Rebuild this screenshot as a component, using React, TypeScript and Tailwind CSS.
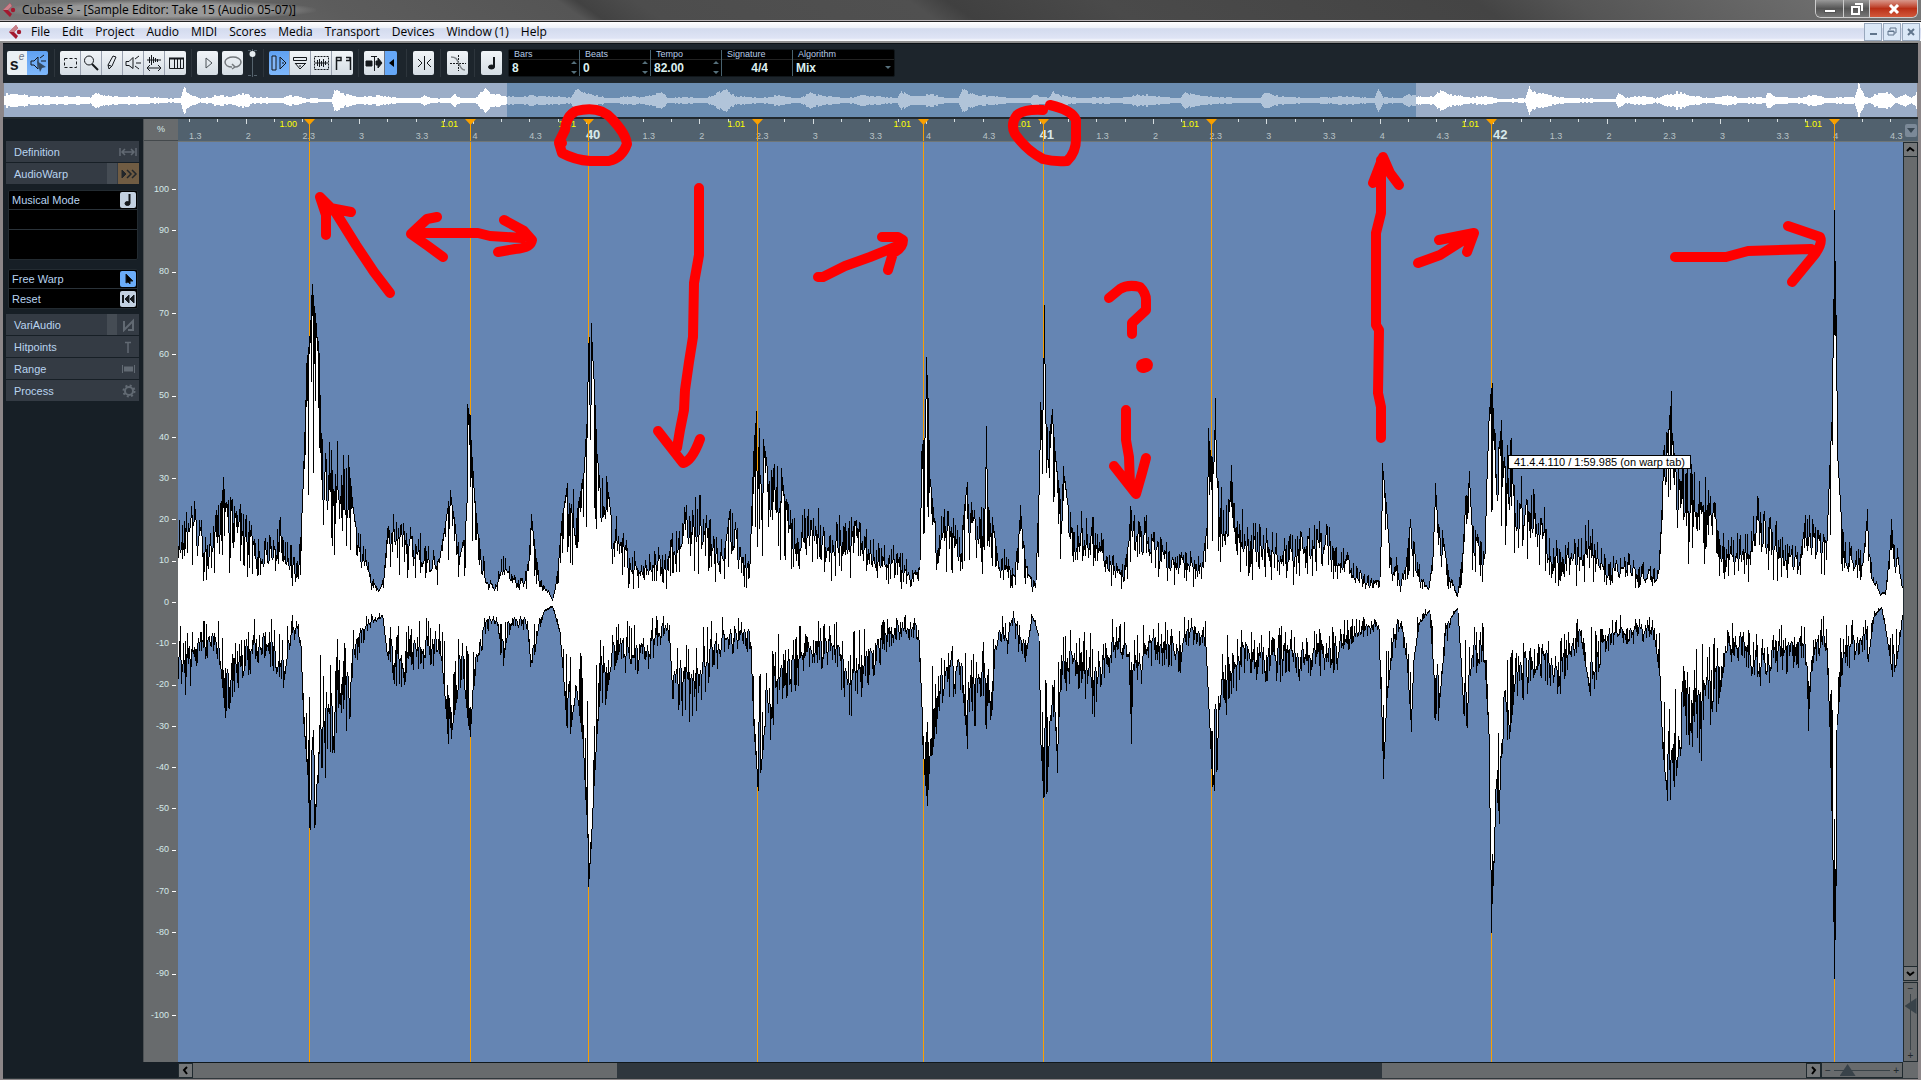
import type { ReactNode } from "react"

const ZERO = 602
const LEFT = 178
const RIGHT = 1903

// x, y pairs of the upper and lower peaks of the sample
const upper = [
  178, 520, 186, 503, 196, 507, 209, 533, 217, 507, 221, 500, 223, 475, 225, 502, 235, 500, 249, 522, 261, 543, 273, 533, 280, 520,
  289, 543, 296, 560, 300, 537, 303, 460, 306, 362, 309, 330, 312, 277, 314, 297, 319, 352, 321, 430, 324, 443, 340, 448, 348, 453,
  352, 497, 356, 527, 364, 543, 370, 570, 378, 590, 383, 577, 387, 527, 397, 508, 407, 525, 419, 533, 427, 547, 439, 557, 447, 507,
  450, 489, 455, 523, 464, 540, 466, 500, 467, 403, 470, 412, 471, 437, 474, 487, 478, 533, 486, 570, 494, 587, 500, 557, 505, 547,
  510, 567, 516, 577, 524, 573, 528, 560, 531, 512, 536, 557, 542, 583, 548, 590, 552, 599, 557, 570, 561, 520, 566, 485, 569, 477,
  573, 493, 577, 507, 583, 470, 586, 420, 588, 340, 591, 323, 594, 373, 597, 450, 600, 487, 606, 473, 611, 513, 621, 522, 629, 550,
  640, 557, 648, 557, 656, 543, 666, 550, 672, 530, 684, 507, 700, 497, 706, 517, 716, 533, 724, 547, 729, 510, 733, 510, 739, 540,
  749, 563, 753, 447, 756, 405, 759, 417, 763, 435, 767, 463, 773, 452, 781, 467, 785, 500, 792, 517, 811, 507, 823, 513, 831, 537,
  838, 515, 849, 517, 857, 510, 863, 517, 871, 537, 883, 547, 898, 547, 910, 567, 919, 567, 921, 447, 924, 435, 926, 355, 928, 393,
  930, 477, 934, 517, 938, 527, 944, 510, 950, 513, 956, 530, 962, 523, 966, 485, 970, 490, 978, 507, 984, 507, 986, 423, 988, 507,
  993, 523, 999, 567, 1005, 547, 1011, 570, 1017, 547, 1020, 503, 1023, 540, 1029, 570, 1035, 583, 1038, 493, 1040, 400, 1042, 410,
  1044, 299, 1046, 423, 1049, 430, 1052, 407, 1055, 450, 1059, 487, 1063, 465, 1067, 497, 1073, 520, 1084, 513, 1096, 517, 1104, 540,
  1112, 553, 1124, 563, 1128, 540, 1130, 505, 1136, 520, 1148, 518, 1154, 530, 1164, 540, 1171, 557, 1187, 547, 1193, 557, 1203, 550,
  1206, 527, 1208, 423, 1210, 450, 1213, 460, 1215, 395, 1217, 477, 1223, 493, 1229, 500, 1231, 462, 1233, 500, 1241, 510, 1247, 523,
  1258, 522, 1270, 527, 1282, 538, 1294, 537, 1304, 527, 1324, 523, 1334, 537, 1345, 550, 1353, 563, 1365, 573, 1379, 580, 1381, 510,
  1382, 459, 1386, 500, 1390, 557, 1396, 557, 1399, 580, 1405, 567, 1410, 517, 1416, 553, 1422, 577, 1428, 588, 1432, 557, 1435, 480,
  1438, 523, 1442, 530, 1448, 570, 1457, 593, 1462, 553, 1465, 493, 1467, 495, 1469, 468, 1472, 523, 1477, 533, 1484, 553, 1486, 477,
  1488, 418, 1490, 393, 1492, 381, 1494, 427, 1498, 447, 1501, 417, 1503, 457, 1511, 437, 1513, 483, 1520, 480, 1533, 492, 1544, 510,
  1550, 543, 1563, 540, 1578, 540, 1588, 522, 1596, 543, 1607, 560, 1626, 553, 1648, 567, 1658, 570, 1661, 510, 1663, 447, 1668, 427,
  1671, 387, 1672, 430, 1676, 470, 1687, 463, 1696, 480, 1706, 483, 1715, 502, 1717, 530, 1730, 537, 1748, 533, 1754, 503, 1758, 497,
  1760, 510, 1778, 523, 1785, 540, 1800, 553, 1805, 515, 1810, 510, 1815, 530, 1826, 540, 1828, 487, 1831, 418, 1833, 297, 1834, 205,
  1836, 310, 1838, 460, 1842, 527, 1846, 543, 1856, 550, 1863, 553, 1867, 507, 1869, 553, 1874, 573, 1880, 593, 1885, 590, 1889, 550,
  1891, 517, 1893, 543, 1897, 547, 1900, 573, 1903, 590,
]

const lower = [
  178, 693, 190, 690, 197, 663, 216, 657, 220, 670, 225, 720, 233, 703, 241, 680, 251, 670, 266, 657, 277, 677, 283, 688, 287, 660,
  296, 633, 300, 647, 303, 727, 307, 778, 309, 834, 315, 828, 317, 787, 323, 778, 328, 775, 334, 747, 350, 720, 351, 683, 359, 653,
  371, 627, 382, 618, 386, 653, 392, 677, 401, 690, 414, 670, 430, 663, 441, 663, 445, 710, 448, 747, 452, 730, 458, 693, 463, 680,
  467, 720, 470, 741, 473, 693, 479, 660, 485, 637, 493, 620, 503, 667, 506, 643, 512, 627, 527, 630, 530, 668, 533, 663, 538, 637,
  544, 613, 552, 608, 559, 633, 563, 683, 566, 727, 570, 735, 576, 693, 582, 740, 587, 840, 588, 894, 591, 855, 594, 787, 597, 737,
  600, 693, 605, 707, 611, 667, 634, 673, 649, 667, 662, 640, 669, 643, 672, 700, 681, 713, 688, 720, 698, 703, 710, 677, 725, 653,
  750, 650, 753, 727, 757, 788, 761, 773, 765, 727, 771, 740, 778, 700, 797, 685, 807, 663, 820, 667, 835, 663, 840, 683, 850, 719,
  857, 703, 863, 690, 873, 677, 883, 660, 897, 638, 918, 640, 921, 707, 922, 745, 925, 790, 927, 806, 930, 760, 932, 758, 935, 730,
  943, 713, 953, 693, 962, 693, 967, 750, 972, 740, 980, 710, 987, 737, 992, 713, 995, 650, 1007, 653, 1013, 627, 1018, 653, 1025, 663,
  1032, 618, 1038, 637, 1040, 747, 1043, 803, 1047, 793, 1050, 723, 1054, 715, 1057, 773, 1060, 693, 1073, 680, 1083, 693, 1095, 715,
  1103, 690, 1113, 660, 1128, 657, 1131, 745, 1133, 670, 1140, 687, 1153, 660, 1180, 673, 1183, 643, 1205, 647, 1208, 710, 1212, 792,
  1217, 773, 1219, 710, 1230, 713, 1242, 673, 1260, 680, 1302, 677, 1335, 673, 1348, 650, 1360, 640, 1378, 630, 1381, 720, 1383, 784,
  1387, 700, 1391, 662, 1399, 631, 1406, 660, 1411, 735, 1414, 660, 1419, 625, 1429, 612, 1433, 677, 1434, 720, 1438, 723, 1443, 663,
  1451, 620, 1457, 610, 1460, 660, 1463, 715, 1467, 730, 1469, 677, 1484, 663, 1488, 737, 1489, 812, 1491, 933, 1494, 870, 1496, 793,
  1499, 827, 1501, 760, 1509, 743, 1513, 707, 1528, 690, 1544, 677, 1556, 698, 1568, 677, 1581, 643, 1590, 698, 1601, 663, 1611, 647,
  1654, 640, 1659, 677, 1662, 753, 1667, 803, 1676, 777, 1679, 750, 1701, 755, 1708, 727, 1718, 707, 1724, 667, 1741, 660, 1764, 690,
  1774, 677, 1804, 663, 1806, 668, 1808, 732, 1811, 673, 1826, 650, 1829, 727, 1832, 860, 1834, 988, 1836, 893, 1837, 727, 1841, 677,
  1864, 650, 1868, 663, 1874, 617, 1881, 610, 1886, 637, 1892, 678, 1896, 667, 1901, 630, 1903, 610,
]

// x, half height pairs of the whole clip
const clip = [
  4, 6, 14, 7, 30, 4, 60, 4, 90, 3, 96, 8, 110, 4, 140, 4, 165, 2, 180, 2, 184, 13, 190, 5, 200, 2, 212, 3, 215, 5, 230, 4, 245, 7, 252, 3,
  280, 2, 290, 5, 305, 2, 331, 1, 334, 11, 345, 6, 360, 3, 380, 5, 400, 2, 420, 2, 424, 6, 430, 2, 450, 2, 454, 7, 460, 2, 475, 2, 480, 8,
  485, 12, 490, 8, 500, 5, 515, 3, 530, 5, 570, 3, 578, 13, 585, 7, 598, 4, 610, 2, 630, 4, 643, 3, 650, 5, 661, 8, 668, 2, 690, 3, 705, 2,
  715, 6, 724, 12, 735, 4, 760, 2, 775, 5, 800, 2, 810, 8, 820, 5, 845, 2, 865, 5, 897, 2, 901, 10, 910, 4, 932, 6, 945, 2, 958, 2,
  962, 12, 975, 5, 995, 4, 1010, 2, 1030, 2, 1034, 6, 1048, 2, 1053, 9, 1060, 5, 1080, 2, 1100, 3, 1120, 2, 1142, 6, 1155, 4, 1180, 2,
  1185, 8, 1195, 5, 1220, 3, 1260, 2, 1264, 7, 1280, 4, 1310, 2, 1344, 4, 1374, 2, 1378, 13, 1383, 3, 1400, 2, 1409, 6, 1421, 3, 1434, 4,
  1438, 10, 1450, 6, 1470, 3, 1485, 4, 1500, 1, 1525, 2, 1529, 13, 1540, 7, 1560, 3, 1600, 1, 1615, 1, 1618, 8, 1625, 2, 1635, 4, 1648, 4,
  1655, 2, 1665, 5, 1677, 9, 1690, 5, 1710, 2, 1728, 5, 1740, 2, 1755, 3, 1765, 3, 1768, 10, 1775, 4, 1795, 2, 1814, 6, 1825, 2, 1854, 3,
  1858, 18, 1864, 4, 1870, 2, 1874, 7, 1890, 7, 1896, 2, 1905, 6, 1911, 2, 1917, 8,
]

function hash(n: number) {
  const v = Math.sin(n * 12.9898) * 43758.5453
  return v - Math.floor(v)
}

function levels(points: number[], from: number, to: number) {
  const out: number[] = []
  let k = 0
  for (let x = from; x < to; x++) {
    while (k + 4 < points.length && points[k + 2] <= x) k += 2
    const t = (x - points[k]) / (points[k + 2] - points[k])
    out.push(points[k + 1] + (points[k + 3] - points[k + 1]) * Math.min(1, Math.max(0, t)))
  }
  return out
}

function buildSide(points: number[], sign: number, seed: number) {
  const env = levels(points, LEFT, RIGHT).map((y) => Math.abs(ZERO - y))
  const peak = env.map((e, i) => {
    const steep = Math.abs(e - (env[i - 2] ?? e)) > 12 || Math.abs(e - (env[i + 2] ?? e)) > 12
    if (steep) return e * (1 - 0.03 * hash(i + seed))
    if (e < 24) return e * (1 - 0.15 * hash(i + seed))
    return e * (1.05 - 0.45 * hash(i + seed))
  })
  let black = ""
  const inner = peak.map((p, i) => {
    const r = hash(i * 3 + seed + 7)
    let q = p * (0.95 - 0.4 * r * r)
    if (hash(i * 7 + seed) > 0.88 && p > 30) q = p * 0.42
    q = Math.min(q, Math.max(p * 0.45, Math.min(peak[i - 1] ?? p, peak[i + 1] ?? p)), p - 2)
    black += `M${LEFT + i + 0.5} ${Math.round(ZERO - sign * p)}V${Math.round(ZERO - sign * q)}`
    return Math.round(ZERO - sign * q)
  })
  return { black, inner }
}

const top = buildSide(upper, 1, 11)
const bottom = buildSide(lower, -1, 907)
const whitePath = top.inner.map((y, i) => `M${LEFT + i + 0.5} ${y}V${bottom.inner[i]}`).join("")

const clipPath = levels(clip, 4, 1917)
  .map((h, i) => {
    const a = Math.max(1, Math.round(h * (0.7 + 0.4 * hash(i >> 1))))
    return `M${4.5 + i} ${100 - a}V${101 + a}`
  })
  .join("")

const markers = [309, 470, 588, 757, 923, 1043, 1211, 1491, 1834]

const rulerMarks = Array.from({ length: 61 }, (_, i) => {
  const beat = i % 2 === 0 ? ["1.3", "2", "2.3", "3", "3.3", "4", "4.3", "bar"][(i / 2) % 8] : ""
  const isBar = beat === "bar"
  return { at: 11 + i * 28.35, label: isBar ? String(40 + (i - 14) / 16) : beat, isBar, long: beat.length === 1 || isBar }
})

const pct = (n: number) => `${(n / (RIGHT - LEFT)) * 100}%`

function Svg({ children, w = 20, h = 20 }: { children: ReactNode; w?: number; h?: number }) {
  return (
    <svg width={w} height={h} viewBox={`0 0 ${w} ${h}`} fill="none" stroke="#15191d" aria-hidden="true">
      {children}
    </svg>
  )
}

function Logo() {
  return (
    <svg width="14" height="14" viewBox="0 0 14 14" aria-hidden="true">
      <path d="M7 0 0 7l7 7 2-3-4-4 4-4z" fill="#a3192f" />
      <path d="M7 0 0 7h5l4-4z" fill="#c98089" />
      <circle cx="10" cy="7" r="2.2" fill="#a3192f" />
    </svg>
  )
}

const icons: Record<string, ReactNode> = {
  range: <path d="M4.500 5.500h12v9h-12z" strokeDasharray="3 2" />,
  zoom: (
    <>
      <circle cx="8" cy="7.500" r="4.500" />
      <path d="m11 11 6 6" strokeWidth="2" />
    </>
  ),
  draw: <path d="M7 16l-1-4 5-9 3 1-4 9-3 3zM6 12l3 1" />,
  play: <path d="M3 8.500h3l4-4v11l-4-3H3zM13 10h5M12 6l4-3M12 13l4 3" />,
  scrub: (
    <>
      <path d="M3 7h14M5.500 4v6M7.500 2v10M9.500 4v6M11.500 5v4M13.500 6v3" />
      <path d="M3 15h14M6 12l-3 3 3 3M14 12l3 3-3 3" />
    </>
  ),
  warp: (
    <>
      <path d="M3.500 5.500h14v10h-14zM8.500 5v11M11.500 5v11M14.500 5v11" />
      <path d="M3 5.500h15" strokeWidth="2" />
    </>
  ),
  start: <path d="M8 5v10l6-5z" stroke="#4b5257" />,
  loop: <path d="M9 14c-4 0-7-2-7-5s4-5 8-5 8 2 8 5-3 5-6 5m-3 2 3-2-3-3" stroke="#74797d" strokeWidth="1.500" />,
  regions: (
    <>
      <path d="M3 3h4v14H3z" fill="#84b7f7" />
      <path d="M11 4v12M11 4l6 6-6 6M13 10h2" />
    </>
  ),
  show: <path d="M3.500 4.500h13v3h-13zM5 10.500h11M5 10l5 6 6-6M10 12v2" />,
  snap: (
    <>
      <path d="M3.500 3.500h14v13h-14z" strokeDasharray="2 1" />
      <path d="M4 10h13M6.500 7v6M8.500 6v8M10.500 8v5M12.500 6v8M14.500 8v4" />
    </>
  ),
  bounds: <path d="M3.500 4v13M3 4.500h5v3H3M13 4.500h4v3h-4M17.500 4v13" strokeWidth="1.500" />,
  auto: (
    <>
      <path d="M10.500 3v15M7 3.500h6" />
      <path d="M2 8h6v5H2zM12 8h2V5l4 5-4 5v-3h-2z" fill="#15191d" />
    </>
  ),
  zero: <path d="m4 6 4 4-4 4M17 6l-4 4 4 4M10.500 3v14" />,
  fade: (
    <>
      <path d="M2 10.500h16M10.500 2v16" strokeDasharray="2 1" />
      <path d="M3 4c6 0 6 3 8 7s3 6 6 6" stroke="#80868a" strokeWidth="1.500" />
    </>
  ),
  note: (
    <>
      <path d="M12 4v10" strokeWidth="2" />
      <ellipse cx="9.500" cy="14" rx="3" ry="2" fill="#15191d" />
    </>
  ),
}

function ToolButton({ name, active = false }: { name: string; active?: boolean }) {
  return (
    <button
      aria-label={name}
      className={
        active
          ? "flex h-6 w-[21px] items-center justify-center bg-gradient-to-b from-[#5fa1f2] to-[#7fb8fb]"
          : "flex h-6 w-[21px] items-center justify-center bg-gradient-to-b from-[#f1f5f8] to-[#d5dde4]"
      }
    >
      <Svg>{icons[name]}</Svg>
    </button>
  )
}

function Group({ names, active }: { names: string[]; active?: string }) {
  return (
    <div className="flex divide-x divide-gray-400 overflow-hidden rounded-xs">
      {names.map((n) => (
        <ToolButton key={n} name={n} active={n === active} />
      ))}
    </div>
  )
}

function Separator() {
  return <div className="h-7 w-px bg-[#2d353c]" />
}

function TitleBar() {
  return (
    <header className="flex h-[21px] items-center justify-between border-b border-[#b9b4b7] bg-[linear-gradient(35deg,#777_0%,#5c5c5c_18%,#555_30%,#424242_31%,#4d4d4d_34%,#505050_48%,#404040_50%,#4a4a4a_58%,#444_77%,#555_82%,#777_100%)] pl-[3px]">
      <div className="flex h-5 items-center gap-1 rounded-full bg-[radial-gradient(ellipse_at_center,#999_45%,#9990_72%)] pr-5">
        <Logo />
        <h1 className="pl-px font-[Open_Sans,sans-serif] text-xs leading-4 text-black">Cubase 5 - [Sample Editor: Take 15 (Audio 05-07)]</h1>
      </div>
      <div className="mr-[3px] flex h-[18px] self-start overflow-hidden rounded-b-md border border-t-0 border-[#ccc]">
        <button aria-label="Minimize" className="flex w-[28px] items-center justify-center border-r border-[#ccc] bg-gradient-to-b from-[#999] via-[#555] to-[#777]">
          <span className="mt-1 h-1 w-3 border border-[#555] bg-white" />
        </button>
        <button aria-label="Restore" className="flex w-[26px] items-center justify-center border-r border-[#ccc] bg-gradient-to-b from-[#999] via-[#555] to-[#777]">
          <svg width="12" height="12" viewBox="0 0 12 12" fill="none" stroke="#fff" strokeWidth="2" aria-hidden="true">
            <path d="M4 1h7v7M1 4h7v7H1z" />
          </svg>
        </button>
        <button aria-label="Close" className="flex w-[47px] items-center justify-center bg-gradient-to-b from-[#d8978b] via-[#b92f16] to-[#d2583a]">
          <svg width="12" height="10" viewBox="0 0 12 10" stroke="#fff" strokeWidth="3" aria-hidden="true">
            <path d="m2 1 8 8M10 1 2 9" />
          </svg>
        </button>
      </div>
    </header>
  )
}

function MenuBar() {
  const menus = ["File", "Edit", "Project", "Audio", "MIDI", "Scores", "Media", "Transport", "Devices", "Window (1)", "Help"]
  const box = "flex size-[18px] items-center justify-center border border-[#98a8bd] bg-[#dbe8f7]"
  return (
    <nav className="flex h-[22px] items-center justify-between border-t border-b-2 border-t-[#222] border-b-[#8f8f8f] bg-[linear-gradient(#fff_0%,#eef1f8_30%,#d3dbee_35%,#dfe4f5_85%,#fff_100%)] pl-[9px]">
      <div className="flex items-center">
        <Logo />
        <div className="ml-2 flex gap-3">
          {menus.map((m) => (
            <button key={m} className="font-[Open_Sans,sans-serif] text-xs leading-4 text-black">
              {m}
            </button>
          ))}
        </div>
      </div>
      <div className="flex gap-px pr-px">
        <button aria-label="Minimize document" className={box}>
          <span className="mt-1 h-[2px] w-[7px] bg-[#60758c]" />
        </button>
        <button aria-label="Restore document" className={box}>
          <svg width="10" height="10" viewBox="0 0 10 10" fill="none" stroke="#60758c" aria-hidden="true">
            <path d="M3 3V1h6v5H7M1 4h6v4H1zM1 4.500h6" />
          </svg>
        </button>
        <button aria-label="Close document" className={box}>
          <svg width="8" height="8" viewBox="0 0 8 8" stroke="#60758c" strokeWidth="2" aria-hidden="true">
            <path d="m1 1 6 6M7 1 1 7" />
          </svg>
        </button>
      </div>
    </nav>
  )
}

function Field({ label, value, spin = false }: { label: string; value: string; spin?: boolean }) {
  const id = `field-${label}`
  return (
    <div className="flex w-[71px] flex-col border-r border-[#48626f]">
      <label htmlFor={id} className="h-[10px] border-b border-[#222] pl-[5px] text-[9px] leading-[8px] text-[#b6cbe6]">
        {label}
      </label>
      <div className="flex h-[17px] items-center justify-between">
        <input
          id={id}
          defaultValue={value}
          className={spin ? "w-12 bg-transparent pl-[3px] text-xs font-bold text-[#dcefef]" : "w-full bg-transparent pr-6 text-right text-xs font-bold text-[#dcefef]"}
        />
        {spin && (
          <svg width="6" height="13" viewBox="0 0 6 13" fill="#56707c" className="mr-[2px]" aria-hidden="true">
            <path d="M0 3h6L3 0zM0 10h6l-3 3z" />
          </svg>
        )}
      </div>
    </div>
  )
}

function Toolbar() {
  return (
    <div className="flex h-[39px] items-center border-t border-[#0d1216] bg-[#1d252c] pl-1">
      <div className="flex overflow-hidden rounded-xs">
        <button aria-label="Solo editor" className="flex h-6 w-5 items-end justify-center bg-[#eaf0f4] text-[#15191d]">
          <span className="text-base leading-5 font-black">s</span>
          <i className="self-start text-[10px] leading-3 text-gray-500">e</i>
        </button>
        <button aria-label="Acoustic feedback" className="flex h-6 w-[21px] items-center justify-center bg-gradient-to-b from-[#5fa1f2] to-[#7fb8fb]">
          <Svg>
            <path d="M3 8h3l4-4v12l-4-4H3zM13 8h5M12 5l4-3" />
            <path d="m9 8 9 6-4 1-2 4z" fill="#34495f" stroke="none" />
          </Svg>
        </button>
      </div>
      <div className="flex items-center gap-[5px] pl-[6px]">
        <Separator />
        <Group names={["range", "zoom", "draw", "play", "scrub", "warp"]} />
        <Separator />
        <div className="flex items-center gap-1">
          <Group names={["start"]} />
          <Group names={["loop"]} />
          <div className="flex h-7 w-[11px] justify-center">
            <svg width="9" height="28" viewBox="0 0 9 28" stroke="#56646e" role="img" aria-label="Audition volume">
              <path d="M4.500 0v28M0 1.500h3M6 1.500h3M0 26.500h3M6 26.500h3" />
              <circle cx="4.500" cy="5" r="3" fill="#e6edf1" stroke="none" />
            </svg>
          </div>
        </div>
        <Separator />
        <Group names={["regions", "show", "snap", "bounds"]} active="regions" />
        <Separator />
        <div className="flex divide-x divide-gray-500 overflow-hidden rounded-xs">
          <ToolButton name="auto" />
          <button aria-label="Suspend auto-scroll" className="flex h-6 w-3 items-center justify-center bg-[#66a8f7]">
            <svg width="5" height="8" viewBox="0 0 5 8" aria-hidden="true">
              <path d="M5 0v8L0 4z" />
            </svg>
          </button>
        </div>
      </div>
      <div className="flex items-center gap-[6px] pl-[9px]">
        <Separator />
        <Group names={["zero"]} />
        <Separator />
        <Group names={["fade"]} />
        <Separator />
        <Group names={["note"]} />
      </div>
      <div className="ml-[6px] flex h-7 rounded-xs border border-[#10161a] bg-black">
        <Field label="Bars" value="8" spin />
        <Field label="Beats" value="0" spin />
        <Field label="Tempo" value="82.00" spin />
        <Field label="Signature" value="4/4" />
        <div className="flex w-[101px] flex-col">
          <label htmlFor="algorithm" className="h-[10px] border-b border-[#222] pl-[5px] text-[9px] leading-[8px] text-[#b6cbe6]">
            Algorithm
          </label>
          <div className="flex h-[17px] items-center justify-between">
            <select id="algorithm" className="w-20 appearance-none bg-black pl-[3px] text-xs font-bold text-[#dcefef]">
              <option>Mix</option>
            </select>
            <svg width="6" height="3" viewBox="0 0 6 3" fill="#56707c" className="mr-[3px]" aria-hidden="true">
              <path d="M0 0h6L3 3z" />
            </svg>
          </div>
        </div>
      </div>
    </div>
  )
}

function Overview() {
  return (
    <div className="border-t border-b-2 border-[#20282d] px-px">
      <svg viewBox="4 83 1913 34" preserveAspectRatio="none" className="block h-[34px] w-full bg-[#9badc7]" shapeRendering="crispEdges" role="img" aria-label="Clip overview">
        <path d={clipPath} stroke="#fff" />
        <rect x="507" y="83" width="909" height="34" fill="#6b8db1" />
        <clipPath id="visible">
          <rect x="507" y="83" width="909" height="34" />
        </clipPath>
        <path d={clipPath} stroke="#b1c4d9" clipPath="url(#visible)" />
      </svg>
    </div>
  )
}

function Section({ title, split = false, active = false, children }: { title: string; split?: boolean; active?: boolean; children: ReactNode }) {
  return (
    <button className="flex h-[21px] w-full items-center justify-between bg-[#343b44] pl-2 text-[11px] leading-4 text-[#b9d3ef]">
      <span>{title}</span>
      <span className="flex h-full items-center">
        {split && <span className="h-full w-[10px] bg-[#454c54]" />}
        <span className={active ? "ml-px flex h-full w-[21px] items-center justify-center bg-[#705c43]" : "flex h-full w-[22px] items-center justify-center"}>
          <svg width="18" height="14" viewBox="0 0 18 14" fill="none" stroke={active ? "#22262a" : "#626a73"} strokeWidth="2" aria-hidden="true">
            {children}
          </svg>
        </span>
      </span>
    </button>
  )
}

function Sidebar() {
  const row = "flex h-[19px] items-center justify-between pr-px pl-[3px] text-[11px] leading-4 text-[#b9d3ef]"
  return (
    <aside className="flex w-[140px] shrink-0 flex-col bg-[#171f26] pt-[22px] pr-1 pl-[3px]">
      <div className="flex flex-col gap-px">
        <Section title="Definition">
          <path d="M1 3v8M17 3v8M3 7h12M6 4 3 7l3 3M12 4l3 3-3 3" strokeWidth="1.500" />
        </Section>
        <Section title="AudioWarp" split active>
          <path d="M2 3v8l4-4z" fill="#22262a" strokeWidth="1" />
          <path d="M7 3l4 4-4 4M12 3l4 4-4 4" strokeWidth="1.500" />
        </Section>
      </div>
      <div className="mt-[6px] mr-px ml-[2px] h-[70px] divide-y divide-[#2a3239] rounded-xs border border-[#232b31] bg-black">
        <div className={row}>
          <span>Musical Mode</span>
          <button aria-label="Musical Mode" className="flex size-4 items-center justify-center rounded-xs bg-[#c3d1e1]">
            <Svg w={16} h={16}>
              <path d="M9.500 2v9" strokeWidth="2" />
              <ellipse cx="7.500" cy="11.500" rx="2.500" ry="2" fill="#15191d" />
            </Svg>
          </button>
        </div>
        <div className="h-5" />
        <div />
      </div>
      <div className="mt-[9px] mr-px ml-[2px] divide-y divide-[#2a3239] rounded-xs border border-[#232b31] bg-black">
        <div className={row}>
          <span>Free Warp</span>
          <button aria-label="Free Warp" className="flex size-4 items-center justify-center rounded-xs bg-[#6bacf8]">
            <Svg w={16} h={16}>
              <path d="M6 3v9l2-1 2 2v-3h3z" fill="#000" />
            </Svg>
          </button>
        </div>
        <div className={row}>
          <span>Reset</span>
          <button aria-label="Reset" className="flex size-4 items-center justify-center rounded-xs bg-[#c3d1e1]">
            <Svg w={16} h={16}>
              <path d="M3 4v8" strokeWidth="2" />
              <path d="M9 4v8L5 8zM14 4v8l-4-4z" fill="#15191d" />
            </Svg>
          </button>
        </div>
      </div>
      <div className="mt-[5px] flex flex-col gap-px">
        <Section title="VariAudio" split>
          <path d="M5 3v9l9-9v9H9" />
        </Section>
        <Section title="Hitpoints">
          <path d="M6 2.500h6M9 2v11" strokeWidth="1.500" />
        </Section>
        <Section title="Range">
          <path d="M3.500 3v8M15.500 3v8" strokeWidth="1" />
          <path d="M5 7h9" strokeWidth="5" />
        </Section>
        <Section title="Process">
          <circle cx="10" cy="7" r="4" />
          <circle cx="10" cy="7" r="5.500" strokeDasharray="2 2.320" />
        </Section>
      </div>
    </aside>
  )
}

function PercentScale() {
  const values = Array.from({ length: 21 }, (_, i) => 100 - i * 10)
  return (
    <div className="flex w-[35px] shrink-0 flex-col border-l border-[#4c5154] bg-[#686b6d] text-[9px] text-[#d5e8e8]">
      <div className="flex h-[22px] items-center justify-center border-b border-[#44494c]">%</div>
      <div className="grid flex-1 auto-rows-fr pt-[28px] pb-[26px]">
        {values.map((v) => (
          <div key={v} className="flex items-center justify-end gap-[3px] pr-[2px]">
            <span>{v}</span>
            <span className="h-px w-1 bg-white" />
          </div>
        ))}
      </div>
    </div>
  )
}

function Ruler() {
  return (
    <div className="flex h-[23px] border-b border-[#6f7677] bg-[#51616e]">
      <div className="relative flex-1">
        {rulerMarks.map((m) => (
          <div key={m.at} className="absolute top-0 h-full" style={{ left: pct(m.at) }}>
            <div className={m.long ? "h-[5px] w-px bg-[#d5dde0]" : "h-[3px] w-px bg-[#d5dde0]"} />
            <span className={m.isBar ? "absolute bottom-0 left-0 text-[13px] leading-[13px] font-bold text-[#d7e8ea]" : "absolute bottom-0 left-0 text-[9px] leading-[10px] text-[#b9c3c7]"}>
              {m.label}
            </span>
          </div>
        ))}
        {markers.map((x, i) => (
          <div key={x} className="absolute top-0 h-full w-px bg-[#f9a000]" style={{ left: pct(x - LEFT) }}>
            <span className="absolute top-0 right-[13px] text-[9px] leading-[10px] text-[#ffff00]">{i === 0 ? "1.00" : "1.01"}</span>
            <svg width="11" height="6" viewBox="0 0 11 6" className="absolute top-0 left-[-5px]" aria-hidden="true">
              <path d="M0 0h11L5.500 6z" fill="#f9a000" />
            </svg>
          </div>
        ))}
      </div>
      <div className="flex w-[15px] items-center justify-center">
        <button aria-label="Ruler format" className="flex h-[13px] w-3 items-center justify-center rounded-xs bg-[#7b8998]">
          <svg width="8" height="5" viewBox="0 0 8 5" fill="#394854" aria-hidden="true">
            <path d="M0 0h8L4 5z" />
          </svg>
        </button>
      </div>
    </div>
  )
}

function Plot() {
  return (
    <svg viewBox="178 142 1725 920" preserveAspectRatio="none" className="h-full w-full" shapeRendering="crispEdges" role="img" aria-label="Waveform">
      {markers.map((x) => (
        <path key={x} d={`M${x + 0.5} 142V1062`} stroke="#f9a000" />
      ))}
      <path d={whitePath} stroke="#fff" />
      <path d={top.black + bottom.black} stroke="#000" />
    </svg>
  )
}

function Annotations() {
  const strokes = [
    "M390 293 374 272 356 245 336 213 320 197 326 215 326 235M320 197 330 208 351 212",
    "M415 233H478L490 236 522 238M437 217 427 219 411 234 428 246 443 257M504 220 524 231 532 240Q531 248 515 249L498 252",
    "M699 188V255L694 283 693 337 689 362 685 390 684 410 680 430 677 448M658 431 683 463Q692 461 700 439",
    "M562 143 559 142 565 130Q566 116 576 111 600 105 612 119 626 134 627 144 622 158 609 161H590Q575 160 562 153L559 143",
    "M818 277H823L845 266 870 257 900 245M882 237H898L903 240Q903 248 893 253L888 270",
    "M1043 110Q1024 109 1017 115 1010 124 1015 134 1026 150 1043 159 1054 162 1067 161 1077 152 1076 135V120Q1072 110 1050 105",
    "M1109 298 1120 289Q1128 284 1140 287 1146 293 1146 300V310L1132 323V334",
    "M1126 410V440L1129 457 1130 485M1114 466 1136 494 1142 473 1146 458",
    "M1381 438V407L1378 393 1379 330 1376 325V233L1381 213V160M1373 183 1383 157 1390 173 1399 185",
    "M1418 263 1440 255 1473 234M1439 240 1474 233 1467 252",
    "M1675 257H1726L1748 251 1811 249M1788 226 1820 237Q1823 243 1815 254L1792 282",
  ]
  return (
    <svg viewBox="178 119 1740 943" preserveAspectRatio="none" className="pointer-events-none absolute inset-0 h-full w-full overflow-visible" fill="none" stroke="#f00" strokeWidth="10" strokeLinecap="round" strokeLinejoin="round" aria-hidden="true">
      {strokes.map((d) => (
        <path key={d} d={d} />
      ))}
      <path d="M1143 366 1146 365" strokeWidth="14" />
    </svg>
  )
}

function Arrow({ d, label }: { d: string; label: string }) {
  return (
    <button aria-label={label} className="flex size-[15px] shrink-0 items-center justify-center border border-[#202a2f] bg-[#747779]">
      <svg width="9" height="9" viewBox="0 0 9 9" fill="none" stroke="#000" strokeWidth="2" aria-hidden="true">
        <path d={d} />
      </svg>
    </button>
  )
}

function VerticalBar() {
  return (
    <div className="flex w-[15px] shrink-0 flex-col bg-[#686b6d]">
      <Arrow d="m1 6 3-3 4 3" label="Scroll up" />
      <div className="flex-1 border-x border-[#202a2f]" />
      <Arrow d="m1 3 3 3 4-3" label="Scroll down" />
      <div className="mt-px flex h-[80px] flex-col items-center justify-between border border-[#202a2f] text-[10px] leading-[11px] text-[#20282c]">
        <span>−</span>
        <input
          type="range"
          aria-label="Vertical zoom"
          defaultValue={10}
          className="h-14 w-3 appearance-none bg-[linear-gradient(#394247,#394247)] bg-[length:1px_100%] bg-center bg-no-repeat [writing-mode:vertical-lr] [&::-webkit-slider-thumb]:h-4 [&::-webkit-slider-thumb]:w-3 [&::-webkit-slider-thumb]:appearance-none [&::-webkit-slider-thumb]:bg-[#39434a] [&::-webkit-slider-thumb]:[clip-path:polygon(0_50%,100%_0,100%_100%)]"
        />
        <span>+</span>
      </div>
    </div>
  )
}

function HorizontalBar() {
  return (
    <div className="flex h-[17px] border-b border-[#30383c] bg-[#171f26] pl-[175px]">
      <div className="flex flex-1 items-center border-t border-[#10181c]">
        <Arrow d="M6 1 3 4l3 4" label="Scroll left" />
        <div className="flex h-[15px] flex-1">
          <div className="flex-[5] bg-[#686b6d]" />
          <div className="flex-[9] bg-[#2f373e]" />
          <div className="flex-[5] bg-[#686b6d]" />
        </div>
        <Arrow d="m3 1 3 3-3 4" label="Scroll right" />
      </div>
      <div className="flex w-[82px] items-center justify-between border border-[#202a2f] bg-[#686b6d] px-[3px] text-[10px] leading-[11px] text-[#20282c]">
        <span>−</span>
        <input
          type="range"
          aria-label="Horizontal zoom"
          defaultValue={14}
          className="h-3 w-14 appearance-none bg-[linear-gradient(#394247,#394247)] bg-[length:100%_1px] bg-center bg-no-repeat [&::-webkit-slider-thumb]:h-3 [&::-webkit-slider-thumb]:w-4 [&::-webkit-slider-thumb]:appearance-none [&::-webkit-slider-thumb]:bg-[#39434a] [&::-webkit-slider-thumb]:[clip-path:polygon(50%_0,100%_100%,0_100%)]"
        />
        <span>+</span>
      </div>
      <div className="w-[15px] bg-[#686b6d]" />
    </div>
  )
}

export default function App() {
  return (
    <div className="flex h-screen flex-col overflow-hidden bg-[#8c8688] font-[Liberation_Sans,Arial,sans-serif]">
      <TitleBar />
      <MenuBar />
      <div className="flex min-h-0 flex-1 flex-col pr-[3px] pb-px pl-[3px]">
        <Toolbar />
        <Overview />
        <main className="flex min-h-0 flex-1">
          <Sidebar />
          <PercentScale />
          <div className="relative flex min-w-0 flex-1 flex-col">
            <Ruler />
            <div className="flex min-h-0 flex-1">
              <div className="relative min-w-0 flex-1 bg-[#6585b3]">
                <div className="absolute inset-0">
                  <Plot />
                </div>
                <div role="tooltip" className="absolute top-[34%] left-[77.1%] border border-black bg-white px-[5px] text-[11px] leading-3 whitespace-nowrap text-black">
                  41.4.4.110 / 1:59.985 (on warp tab)
                </div>
              </div>
              <VerticalBar />
            </div>
            <Annotations />
          </div>
        </main>
        <HorizontalBar />
      </div>
    </div>
  )
}
